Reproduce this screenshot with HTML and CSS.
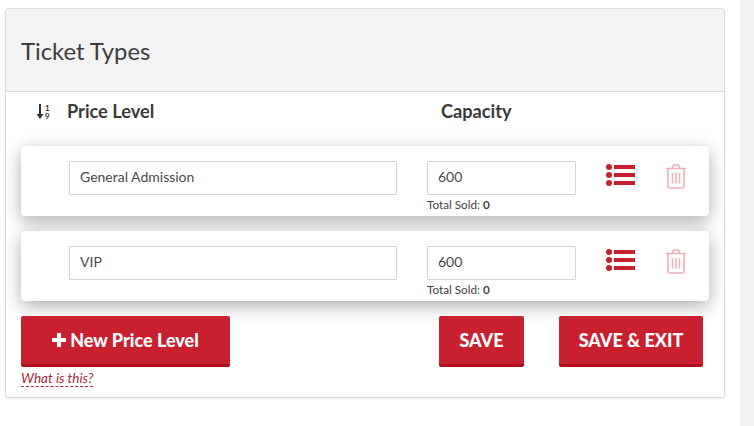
FILE: index.html
```html
<!DOCTYPE html>
<html lang="en">
<head>
  <meta charset="UTF-8">
  <title>Ticket Types</title>
  <link rel="stylesheet" href="styles.css">
</head>
<body>

<div class="page">
  <div class="panel">
    <div class="panel-header">
      <h2>Ticket Types</h2>
    </div>

    <div class="panel-body">
      <div class="columns">
        <span class="sort-icon">
          <svg width="14" height="17" viewBox="0 0 14 17">
            <path d="M3 1h2v10h2.500L4 16 0.500 11H3z" fill="#333"/>
            <text x="9" y="7.500" class="sort-digit">1</text>
            <text x="9" y="16" class="sort-digit">9</text>
          </svg>
        </span>
        <span class="col-name">Price Level</span>
        <span class="col-capacity">Capacity</span>
      </div>

      <div class="level-card">
        <input class="name-input" type="text" value="General Admission">
        <div class="capacity">
          <input class="capacity-input" type="text" value="600">
          <div class="sold">Total Sold: <b>0</b></div>
        </div>
        <svg class="list-icon" width="30" height="22" viewBox="0 0 30 22">
          <circle cx="3" cy="3" r="3"/><rect x="8" y="1" width="21" height="4"/>
          <circle cx="3" cy="11" r="3"/><rect x="8" y="9" width="21" height="4"/>
          <circle cx="3" cy="19" r="3"/><rect x="8" y="17" width="21" height="4"/>
        </svg>
        <svg class="trash-icon" width="22" height="25" viewBox="0 0 22 25">
          <path d="M1 4.500h20M3 4.500V22a2 2 0 0 0 2 2h12a2 2 0 0 0 2-2V4.500M7 4.500l1.500-3.500h5L15 4.500M7.500 9v10.500M11 9v10.500M14.500 9v10.500"/>
        </svg>
      </div>

      <div class="level-card">
        <input class="name-input" type="text" value="VIP">
        <div class="capacity">
          <input class="capacity-input" type="text" value="600">
          <div class="sold">Total Sold: <b>0</b></div>
        </div>
        <svg class="list-icon" width="30" height="22" viewBox="0 0 30 22">
          <circle cx="3" cy="3" r="3"/><rect x="8" y="1" width="21" height="4"/>
          <circle cx="3" cy="11" r="3"/><rect x="8" y="9" width="21" height="4"/>
          <circle cx="3" cy="19" r="3"/><rect x="8" y="17" width="21" height="4"/>
        </svg>
        <svg class="trash-icon" width="22" height="25" viewBox="0 0 22 25">
          <path d="M1 4.500h20M3 4.500V22a2 2 0 0 0 2 2h12a2 2 0 0 0 2-2V4.500M7 4.500l1.500-3.500h5L15 4.500M7.500 9v10.500M11 9v10.500M14.500 9v10.500"/>
        </svg>
      </div>

      <div class="actions">
        <div class="new-level">
          <button class="btn btn-new" type="button">
            <svg width="14" height="14" viewBox="0 0 14 14"><path d="M5 0h4v5h5v4H9v5H5V9H0V5h5z" fill="#fff"/></svg>
            New Price Level
          </button>
          <a class="help-link" href="#">What is this?</a>
        </div>
        <button class="btn btn-save" type="button">SAVE</button>
        <button class="btn btn-exit" type="button">SAVE &amp; EXIT</button>
      </div>
    </div>
  </div>
  <div class="scroll-strip"></div>
</div>

</body>
</html>
```

FILE: styles.css
```css
* { margin: 0; padding: 0; box-sizing: border-box; }
html, body { height: 100%; overflow: hidden; }
body {
  font-family: 'Lato', 'Open Sans', sans-serif;
  color: #3a3a3a;
  background: #fff;
}
.page {
  display: flex;
  height: 426px;
}
.panel {
  width: 720px;
  height: 390px;
  margin: 8px 15px 0 5px;
  border: 1px solid #dcdcdc;
  border-radius: 3px;
  box-shadow: 0 1px 2px rgba(0,0,0,0.08);
  overflow: hidden;
}
.scroll-strip {
  width: 14px;
  background: #f1f1f1;
}
.panel-header {
  height: 83px;
  display: flex;
  align-items: center;
  padding: 1px 15px 0;
  background: #f3f3f3;
  border-bottom: 1px solid #dddddd;
}
.panel-header h2 {
  font-size: 23.800px;
  font-weight: 400;
  color: #3d3d3d;
}
.panel-body {
  padding: 0 15px;
}
.columns {
  display: flex;
  align-items: center;
  height: 38px;
  font-size: 18.200px;
  font-weight: 700;
  color: #3a3a3a;
  margin-bottom: 16px;
}
.sort-icon {
  display: flex;
  width: 46px;
  padding-left: 15px;
}
.sort-digit {
  font-size: 8px;
  font-weight: 700;
  fill: #333;
}
.col-name { width: 374px; }
.level-card {
  display: flex;
  align-items: flex-start;
  height: 70px;
  margin-bottom: 15px;
  padding: 15px 0 0 48px;
  background: #fff;
  border-radius: 4px;
  box-shadow: 0 5px 18px rgba(0,0,0,0.32);
}
.level-card input {
  display: block;
  height: 34px;
  padding: 0 10px 3px;
  border: 1px solid #d4d4d4;
  border-radius: 1px;
  font-family: inherit;
  font-size: 14px;
  color: #4a4a4a;
  background: #fff;
}
.name-input { width: 328px; }
.capacity { margin-left: 30px; }
.capacity-input { width: 149px; }
.sold {
  margin-top: 2px;
  font-size: 11.700px;
  line-height: 14px;
  color: #444;
}
.list-icon {
  margin: 3px 0 0 30px;
  fill: #c9202f;
}
.trash-icon {
  margin: 3px 0 0 29px;
  fill: none;
  stroke: #eeb1b8;
  stroke-width: 1.600;
}
.actions {
  display: flex;
  align-items: flex-start;
}
.new-level {
  width: 418px;
}
.btn {
  display: block;
  height: 51px;
  border: none;
  border-bottom: 3px solid #b20d1c;
  border-radius: 2px;
  background: #c9202f;
  color: #fff;
  font-family: inherit;
  font-size: 18px;
  font-weight: 900;
}
.btn-new {
  width: 209px;
  display: flex;
  align-items: center;
  justify-content: center;
  gap: 4px;
}
.btn-save { width: 85px; }
.btn-exit { width: 144px; margin-left: 35px; }
.help-link {
  font-size: 13.500px;
  font-style: italic;
  line-height: 15px;
  color: #a8283a;
  text-decoration: none;
  border-bottom: 1px dashed #a8283a;
  display: inline-block;
}
```
